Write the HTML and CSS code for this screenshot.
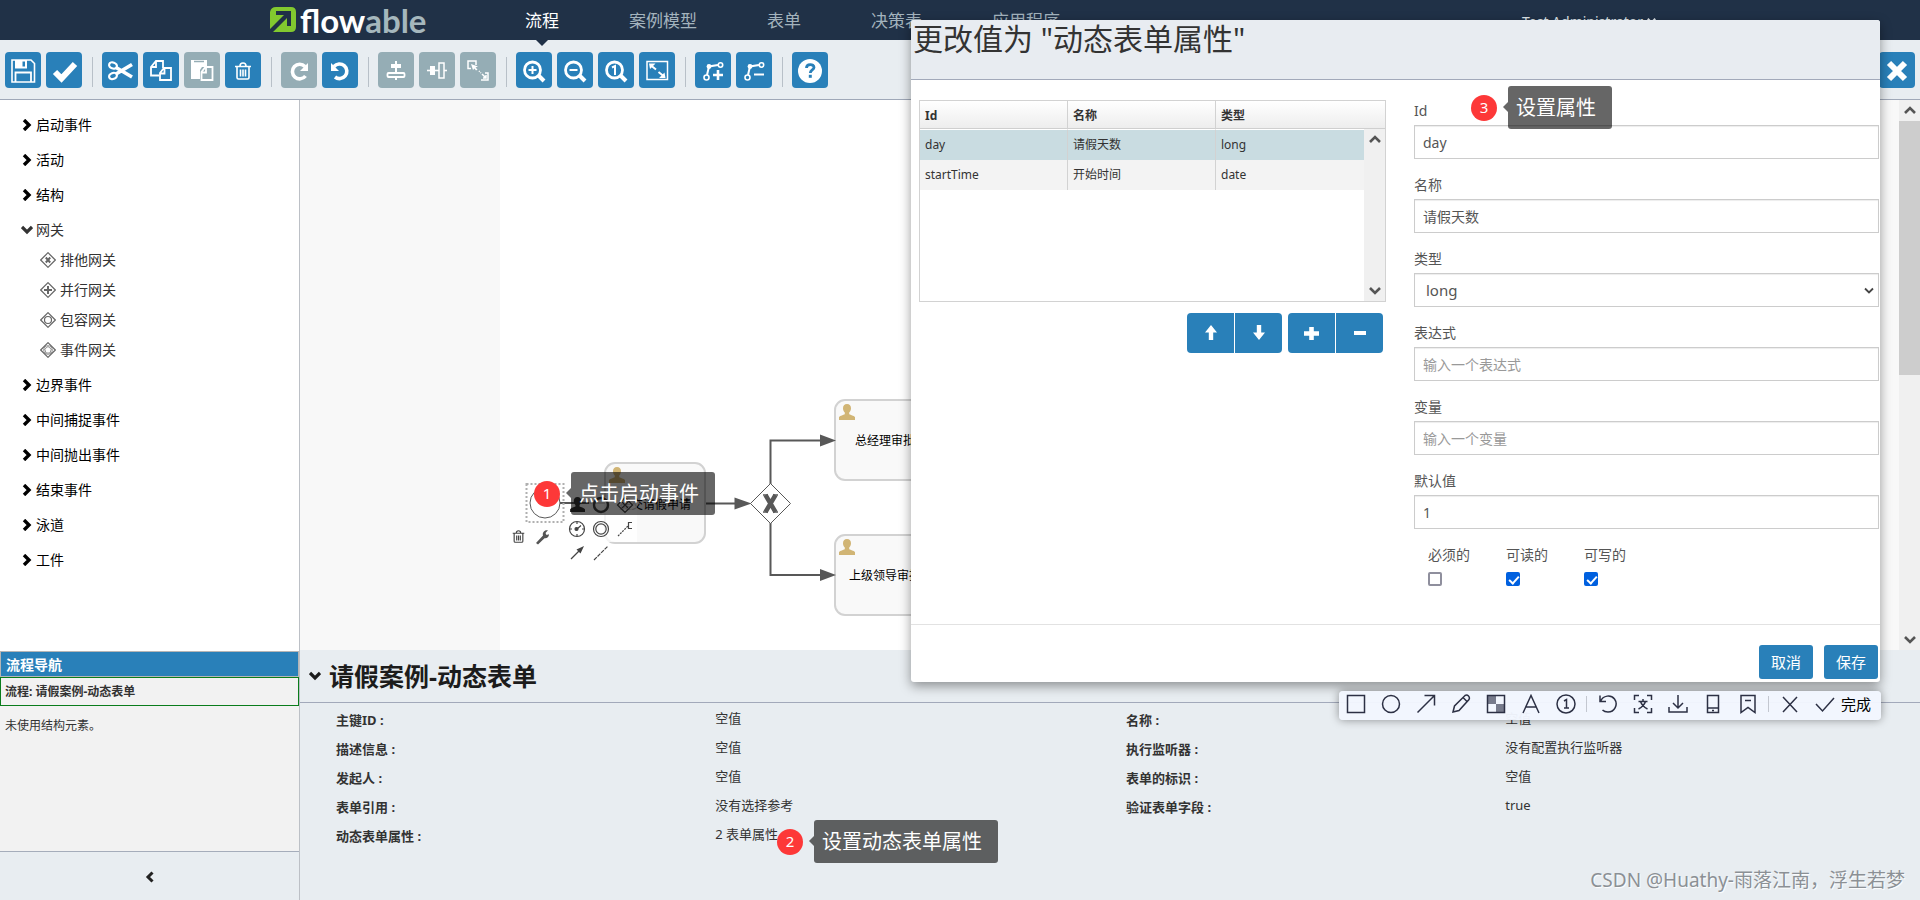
FILE: index.html
```html
<!DOCTYPE html>
<html lang="zh-CN">
<head>
<meta charset="utf-8">
<title>Flowable Modeler</title>
<link rel="stylesheet" href="styles.css">
</head>
<body>
<svg class="defs" aria-hidden="true">
  <symbol id="chev-right" viewBox="0 0 10 12"><path d="M2 1l5 5-5 5" fill="none" stroke="currentColor" stroke-width="3.4"/></symbol>
  <symbol id="chev-down" viewBox="0 0 12 10"><path d="M1 2l5 5 5-5" fill="none" stroke="currentColor" stroke-width="3.2"/></symbol>
  <symbol id="arrow-up" viewBox="0 0 12 12"><path d="M1 9l5-5 5 5" fill="none" stroke="#555" stroke-width="2.6"/></symbol>
  <symbol id="arrow-down" viewBox="0 0 12 12"><path d="M1 3l5 5 5-5" fill="none" stroke="#555" stroke-width="2.6"/></symbol>
  <symbol id="user" viewBox="0 0 16 16"><path d="M8 0c2.700 0 4 1.900 4 4.300 0 1.900-.8 3.400-1.800 4.300v1.600c1.600.9 4.300 1.300 5.800 2.800V16H0v-3c1.500-1.500 4.200-1.900 5.800-2.800V8.600C4.800 7.700 4 6.200 4 4.300 4 1.900 5.300 0 8 0z" fill="currentColor"/></symbol>
  <symbol id="trash" viewBox="0 0 18 18"><path d="M1 4.500h16M6 4c0-4 6-4 6 0M3 5v10.500q0 1.500 1.500 1.500h9q1.500 0 1.500-1.500V5M6.500 7.500v7M9 7.500v7M11.500 7.500v7" fill="none" stroke="currentColor" stroke-width="1.600"/></symbol>
</svg>

<header class="topbar">
  <a class="logo" href="#">
    <svg width="26" height="26" viewBox="0 0 26 26"><path d="M6 0h15q5 0 5 5v15q0 5-5 5H3l5-5 9-9v8h4V4H6v4h8l-8 8-6 6V5q1-5 6-5z" fill="#82c92f"/><path d="M0 25l8-10v4z" fill="#203147"/></svg>
    <span class="logo-text">flow<span class="logo-dim">able</span></span>
  </a>
  <nav class="main-nav">
    <a class="active" href="#">流程</a><a href="#">案例模型</a><a href="#">表单</a><a href="#">决策表</a><a href="#">应用程序</a>
  </nav>
  <a class="account" href="#">Test Administrator <svg width="9" height="9" viewBox="0 0 12 12"><path d="M1 1l5 5 5-5" fill="none" stroke="currentColor" stroke-width="2.600"/></svg></a>
</header>

<div class="toolbar">
  <div class="group">
    <button aria-label="保存"><svg viewBox="0 0 36 36"><path d="M7 8h19l3.500 3.500V30H7z" fill="none" stroke="#fff" stroke-width="1.600"/><path d="M10 8h12v8.500H10z" fill="#fff"/><path d="M17.500 9.500h2.500v5h-2.500z" fill="#2980b9"/><path d="M10.500 30v-9.500h15.500V30" fill="none" stroke="#fff" stroke-width="1.800"/></svg></button>
    <button aria-label="验证"><svg viewBox="0 0 36 36"><path d="M9 20l6.500 6.500L29 12" fill="none" stroke="#fff" stroke-width="6"/></svg></button>
  </div>
  <div class="group">
    <button aria-label="剪切"><svg viewBox="0 0 36 36" fill="none" stroke="#fff" stroke-width="2.200"><ellipse cx="11" cy="13.500" rx="4" ry="3" transform="rotate(20 11 13.500)"/><ellipse cx="11" cy="24" rx="4" ry="3" transform="rotate(-20 11 24)"/><path d="M14 15.500L30 25M14 22L30 12.500" stroke-width="3.600"/></svg></button>
    <button aria-label="复制"><svg viewBox="0 0 36 36" fill="none" stroke="#fff" stroke-width="1.800"><path d="M16 23.500H8V15l5-6h7v7"/><path d="M13 9v6H8M17 28v-7l4-5h7v12zM21.500 16v5.500H17"/></svg></button>
    <button class="off" aria-label="粘贴"><svg viewBox="0 0 36 36"><path d="M7 8h16v7h-5l-2 3v9H7z" fill="#fff"/><path d="M10 9.500h10" stroke="#95adb5" stroke-width="1.500"/><path d="M17.500 28v-8l4-5h7v13z" fill="#95adb5" stroke="#fff" stroke-width="1.800"/><path d="M22 15v5.500h-4.500" fill="none" stroke="#fff" stroke-width="1.800"/></svg></button>
    <button aria-label="删除"><svg viewBox="0 0 36 36"><use href="#trash" x="9" y="10" width="18" height="18" color="#fff"/></svg></button>
  </div>
  <div class="group">
    <button class="off" aria-label="重做"><svg viewBox="0 0 36 36"><path d="M24 14.500A7.300 7.300 0 1 0 24.500 24" fill="none" stroke="#fff" stroke-width="3.600"/><path d="M27 11v8h-8z" fill="#fff"/></svg></button>
    <button aria-label="撤销"><svg viewBox="0 0 36 36"><path d="M12 14.500A7.300 7.300 0 1 1 13 25" fill="none" stroke="#fff" stroke-width="3.600"/><path d="M9 11v8h8z" fill="#fff"/></svg></button>
  </div>
  <div class="group">
    <button class="off" aria-label="垂直对齐"><svg viewBox="0 0 36 36"><path d="M18 9v19" stroke="#fff" stroke-width="2"/><path d="M13 12h10v4H13z" fill="#fff"/><rect x="9.500" y="21" width="17" height="4" rx="1" fill="#95adb5" stroke="#fff" stroke-width="1.800"/></svg></button>
    <button class="off" aria-label="水平对齐"><svg viewBox="0 0 36 36"><path d="M8 18.500h20" stroke="#fff" stroke-width="1.600"/><path d="M11 14h5v9h-5z" fill="#fff"/><rect x="20" y="11" width="5" height="15" fill="#95adb5" stroke="#fff" stroke-width="1.500"/></svg></button>
    <button class="off" aria-label="同样大小"><svg viewBox="0 0 36 36" fill="none" stroke="#fff" stroke-width="1.500"><path d="M11 16.500H8V9h8v4"/><path d="M11 12l7 2.500-2.500 1 2 2-1.500 1-1.500-2-1.500 1.500z" fill="#fff" stroke="none"/><path d="M19 19l2 2" stroke-dasharray="1 1"/><path d="M21 28h7v-7h-3M22 22l4 4m0-3v3h-3"/></svg></button>
  </div>
  <div class="group">
    <button aria-label="放大"><svg viewBox="0 0 36 36" fill="none" stroke="#fff"><circle cx="16.500" cy="18" r="8" stroke-width="2.800"/><path d="M22 23l6 6" stroke-width="4"/><path d="M12.500 18h8M16.500 14v8" stroke-width="2"/></svg></button>
    <button aria-label="缩小"><svg viewBox="0 0 36 36" fill="none" stroke="#fff"><circle cx="16.500" cy="18" r="8" stroke-width="2.800"/><path d="M22 23l6 6" stroke-width="4"/><path d="M12.500 18h8" stroke-width="2"/></svg></button>
    <button aria-label="原始大小"><svg viewBox="0 0 36 36" fill="none" stroke="#fff"><circle cx="16.500" cy="18" r="8" stroke-width="2.800"/><path d="M22 23l6 6" stroke-width="4"/><path d="M14 15.500l3-1.500v9" stroke-width="2"/></svg></button>
    <button aria-label="适应窗口"><svg viewBox="0 0 36 36" fill="none" stroke="#fff"><rect x="8" y="9.500" width="20.500" height="18" stroke-width="1.500"/><path d="M12 13.500l5 4M19.500 20l5 4" stroke-width="2"/><path d="M10 11.500h6.500L11 17zM26.500 26H20l5.500-5.500z" fill="#fff" stroke="none"/></svg></button>
  </div>
  <div class="group">
    <button aria-label="添加折点"><svg viewBox="0 0 36 36" fill="none" stroke="#fff" stroke-width="1.600"><circle cx="11.500" cy="25.500" r="2.500"/><circle cx="25.500" cy="13" r="2.200"/><path d="M12 23l2-8.500L23 13" stroke-width="2"/><circle cx="14" cy="14.500" r="2.400" fill="#fff" stroke="none"/><path d="M18 23h10M23 18v10" stroke-width="2.600"/></svg></button>
    <button aria-label="删除折点"><svg viewBox="0 0 36 36" fill="none" stroke="#fff" stroke-width="1.600"><circle cx="11.500" cy="25.500" r="2.500"/><circle cx="25.500" cy="13" r="2.200"/><path d="M12 23l2-8.500L23 13" stroke-width="2"/><circle cx="14" cy="14.500" r="2.400" fill="#fff" stroke="none"/><path d="M18 22.500h10" stroke-width="2"/></svg></button>
  </div>
  <div class="group">
    <button aria-label="帮助"><svg viewBox="0 0 36 36"><circle cx="18" cy="19" r="12" fill="#fff"/><path d="M14.500 16c0-4.500 7.500-4.500 7.500-.5 0 2.500-3.700 2.500-3.700 5.500" fill="none" stroke="#2980b9" stroke-width="2.800"/><path d="M16.800 22.800h3v3h-3z" fill="#2980b9"/></svg></button>
  </div>
  <button class="close" aria-label="关闭"><svg viewBox="0 0 36 36"><path d="M10 11l16 16M26 11L10 27" stroke="#fff" stroke-width="6"/></svg></button>
</div>

<div class="workspace">
  <aside class="sidebar">
    <ul class="palette">
      <li><span class="head"><svg><use href="#chev-right"/></svg>启动事件</span></li>
      <li><span class="head"><svg><use href="#chev-right"/></svg>活动</span></li>
      <li><span class="head"><svg><use href="#chev-right"/></svg>结构</span></li>
      <li class="open"><span class="head"><svg><use href="#chev-down"/></svg>网关</span>
        <ul class="stencils">
          <li><svg viewBox="0 0 16 16"><path d="M8 .7L15.300 8 8 15.300.7 8z"/><path d="M5.800 5.500l4.400 5M10.200 5.500l-4.400 5" stroke-width="2"/></svg>排他网关</li>
          <li><svg viewBox="0 0 16 16"><path d="M8 .7L15.300 8 8 15.300.7 8z"/><path d="M4 8h8M8 4v8" stroke-width="2"/></svg>并行网关</li>
          <li><svg viewBox="0 0 16 16"><path d="M8 .7L15.300 8 8 15.300.7 8z"/><circle cx="8" cy="8" r="3.500"/></svg>包容网关</li>
          <li><svg viewBox="0 0 16 16"><path d="M8 .7L15.300 8 8 15.300.7 8z"/><circle cx="8" cy="8" r="4.300" stroke-width=".7"/><path d="M8 4.500l3.300 2.500-1.300 4H6L4.700 7z" stroke-width=".7"/></svg>事件网关</li>
        </ul>
      </li>
      <li><span class="head"><svg><use href="#chev-right"/></svg>边界事件</span></li>
      <li><span class="head"><svg><use href="#chev-right"/></svg>中间捕捉事件</span></li>
      <li><span class="head"><svg><use href="#chev-right"/></svg>中间抛出事件</span></li>
      <li><span class="head"><svg><use href="#chev-right"/></svg>结束事件</span></li>
      <li><span class="head"><svg><use href="#chev-right"/></svg>泳道</span></li>
      <li><span class="head"><svg><use href="#chev-right"/></svg>工件</span></li>
    </ul>
    <section class="navigator">
      <h2>流程导航</h2>
      <p class="current">流程: 请假案例-动态表单</p>
      <p class="empty">未使用结构元素。</p>
    </section>
    <button class="collapse" aria-label="收起"><svg width="10" height="12" viewBox="0 0 10 12"><path d="M7.500 1.500L3 6l4.500 4.500" fill="none" stroke="#222" stroke-width="3"/></svg></button>
  </aside>

  <main class="editor">
    <div class="canvas">
      <div class="sheet">
        <svg class="diagram" width="600" height="550" viewBox="500 100 600 550">
          <g fill="#f9f9f9" stroke="#d2d2d2" stroke-width="2">
            <rect x="605" y="463" width="100" height="80" rx="10"/>
            <rect x="835" y="400" width="100" height="80" rx="10"/>
            <rect x="835" y="535" width="100" height="80" rx="10"/>
          </g>
          <g color="#d1b575">
            <use href="#user" x="609" y="467" width="16" height="16"/>
            <use href="#user" x="839" y="404" width="16" height="16"/>
            <use href="#user" x="839" y="539" width="16" height="16"/>
          </g>
          <g class="node-label">
            <text x="655" y="509">提交请假申请</text>
            <text x="885" y="445">总经理审批</text>
            <text x="885" y="580">上级领导审批</text>
          </g>
          <g fill="none" stroke="#585858" stroke-width="2">
            <path d="M560 503h45M706 503.500h30M770.500 484V440.500H822M770.500 522v53H822"/>
          </g>
          <path d="M734.500 497.500v12l17-6zM820 434.500v12l16-6zM820 569v12l16-6z" fill="#585858"/>
          <path d="M770.500 483.500l20 20-20 20-20-20z" fill="#fff" stroke="#585858"/>
          <path d="M765.500 495l10 17M775.500 495l-10 17" stroke="#585858" stroke-width="4.500"/>
          <path d="M763 495h5M773 495h5M763 512h5M773 512h5" stroke="#585858" stroke-width="1.500"/>
          <rect x="589" y="497" width="48" height="45" fill="#fff" opacity=".75"/>
          <circle cx="545" cy="503" r="15" fill="#fff" stroke="#585858"/>
          <rect x="526.500" y="484" width="37" height="38" fill="none" stroke="#b0b0b0" stroke-width="2" stroke-dasharray="2 2"/>
          <use href="#trash" x="512" y="530" width="13" height="13" color="#444"/>
          <path d="M536 543l7-7.500c-1-3 1.500-6 5-5.200l-2.500 2.700 1 2 2.500-.8c0 3-2.500 4.500-4.500 4l-6.500 6.300z" fill="#555"/>
          <use href="#user" x="570" y="497" width="15" height="15" color="#333"/>
          <g fill="none" stroke="#444" stroke-width="1.200">
            <circle cx="601" cy="505" r="7" stroke-width="2.400"/>
            <path d="M625 497.500l7.500 7.500-7.500 7.500-7.500-7.500zM622 502l6 6M628 502l-6 6"/>
            <circle cx="577" cy="529" r="7.500"/><path d="M577 529l4-3.500M577 522v2M577 534v2M570 529h2M582 529h2"/><circle cx="576.500" cy="529" r="1.500" fill="#444"/>
            <circle cx="601" cy="529" r="7.500"/><circle cx="601" cy="529" r="5.200"/>
            <path d="M618 536l10-10" stroke-dasharray="2 1"/><path d="M632 522.500h-3.500v6h3.500"/>
            <path d="M571 559l10-10"/><path d="M576.500 549.500L584 546l-3.500 7.500z" fill="#444" stroke="none"/>
            <path d="M594 560l14-14" stroke-dasharray="4 1"/>
          </g>
        </svg>
      </div>
      <div class="scrollbar">
        <svg><use href="#arrow-up"/></svg><span class="thumb"></span><svg class="end"><use href="#arrow-down"/></svg>
      </div>
    </div>
    <section class="properties">
      <h1><svg width="12" height="10"><use href="#chev-down"/></svg>请假案例-动态表单</h1>
      <div class="columns">
        <dl>
          <dt>主键ID :</dt><dd>空值</dd>
          <dt>描述信息 :</dt><dd>空值</dd>
          <dt>发起人 :</dt><dd>空值</dd>
          <dt>表单引用 :</dt><dd>没有选择参考</dd>
          <dt>动态表单属性 :</dt><dd>2 表单属性</dd>
        </dl>
        <dl>
          <dt>名称 :</dt><dd>空值</dd>
          <dt>执行监听器 :</dt><dd>没有配置执行监听器</dd>
          <dt>表单的标识 :</dt><dd>空值</dd>
          <dt>验证表单字段 :</dt><dd>true</dd>
        </dl>
      </div>
    </section>
  </main>
</div>

<div class="dialog" role="dialog" aria-labelledby="dialog-title">
  <h2 id="dialog-title">更改值为 "动态表单属性"</h2>
  <div class="dialog-body">
    <div class="list-pane">
      <div class="grid">
        <table>
          <thead><tr><th>Id</th><th>名称</th><th>类型</th></tr></thead>
          <tbody>
            <tr class="selected"><td>day</td><td>请假天数</td><td>long</td></tr>
            <tr><td>startTime</td><td>开始时间</td><td>date</td></tr>
          </tbody>
        </table>
        <div class="scrollbar grid-scroll"><svg><use href="#arrow-up"/></svg><svg class="end"><use href="#arrow-down"/></svg></div>
      </div>
      <div class="grid-actions">
        <div class="pair">
          <button aria-label="上移"><svg width="14" height="16" viewBox="0 0 14 16"><path d="M7 0l6 7.500H9.200V15H4.800V7.500H1z" fill="#fff"/></svg></button>
          <button aria-label="下移"><svg width="14" height="16" viewBox="0 0 14 16"><path d="M7 15l6-7.500H9.200V0H4.800v7.500H1z" fill="#fff"/></svg></button>
        </div>
        <div class="pair">
          <button aria-label="添加"><svg width="16" height="16" viewBox="0 0 16 16"><path d="M7.500 2v13M0 8.500h15" stroke="#fff" stroke-width="4.600"/></svg></button>
          <button aria-label="删除"><svg width="16" height="16" viewBox="0 0 16 16"><path d="M2 8h12" stroke="#fff" stroke-width="4"/></svg></button>
        </div>
      </div>
    </div>
    <form class="fields">
      <label for="f-id">Id</label><input id="f-id" type="text" value="day">
      <label for="f-name">名称</label><input id="f-name" type="text" value="请假天数">
      <label for="f-type">类型</label>
      <div class="select"><select id="f-type"><option>long</option><option>date</option></select><svg width="10" height="8" viewBox="0 0 10 8"><path d="M1 1.500l4 4 4-4" fill="none" stroke="#444" stroke-width="1.800"/></svg></div>
      <label for="f-exp">表达式</label><input id="f-exp" type="text" placeholder="输入一个表达式">
      <label for="f-var">变量</label><input id="f-var" type="text" placeholder="输入一个变量">
      <label for="f-def">默认值</label><input id="f-def" type="text" value="1">
      <div class="checks">
        <label>必须的<input type="checkbox"></label>
        <label>可读的<input type="checkbox" checked></label>
        <label>可写的<input type="checkbox" checked></label>
      </div>
    </form>
  </div>
  <div class="dialog-footer"><button>取消</button><button>保存</button></div>
</div>

<div class="step step-1"><span class="num">1</span><span class="tip">点击启动事件</span></div>
<div class="step step-2"><span class="num">2</span><span class="tip">设置动态表单属性</span></div>
<div class="step step-3"><span class="num">3</span><span class="tip">设置属性</span></div>

<div class="capture">
  <button aria-label="矩形"><svg viewBox="0 0 20 20"><rect x="1.500" y="1.500" width="17" height="17"/></svg></button>
  <button aria-label="椭圆"><svg viewBox="0 0 20 20"><circle cx="10" cy="10" r="8.500"/></svg></button>
  <button aria-label="箭头"><svg viewBox="0 0 20 20"><path d="M1.500 18.500L18 2M8.500 1.500h10v10"/></svg></button>
  <button aria-label="画笔"><svg viewBox="0 0 20 20"><path d="M2 18l1.500-6L14 1.500q2-1 3.500.5t.5 3.500L8 16.500zM12 3.500l4.500 4.500"/></svg></button>
  <button aria-label="马赛克"><svg viewBox="0 0 20 20"><path d="M2 2h8v8H2zM10 10h8v8h-8z" fill="#777b8c" stroke="none"/><rect x="1.500" y="1.500" width="17" height="17"/></svg></button>
  <button aria-label="文字"><svg viewBox="0 0 20 20"><path d="M2 19L10 1.500 18 19M5 13h10"/></svg></button>
  <button aria-label="序号"><svg viewBox="0 0 20 20"><circle cx="10" cy="10" r="9"/><path d="M8 7l2.500-1.500V14M8 14h5"/></svg></button>
  <i></i>
  <button aria-label="撤销"><svg viewBox="0 0 20 20"><path d="M2 1.500v6h6M2.500 7.500C5 1 13 .5 16.500 5c4 5.500 0 13-6.500 13-2.500 0-4-.5-5.500-2"/></svg></button>
  <button aria-label="翻译"><svg viewBox="0 0 20 20"><path d="M6 1.500H1.500V6M14 1.500h4.500V6M6 18.500H1.500V14M14 18.500h4.500V14M5.500 7.500h9M10 5v2.500M7.500 7.500c1 3 4 6 7 7.500M12.500 7.500c-1 3-4 6-7 7.500"/></svg></button>
  <button aria-label="保存"><svg viewBox="0 0 20 20"><path d="M10 1v12.500M5 9l5 5 5-5M1 13v5h18v-5"/></svg></button>
  <button aria-label="手机"><svg viewBox="0 0 20 20"><path d="M4.500 1.500h11v17h-11zM4.500 14h11M9 16.500h2"/></svg></button>
  <button aria-label="收藏"><svg viewBox="0 0 20 20"><path d="M3 1.500h14v17l-7-5-7 5zM7 6.500h6"/></svg></button>
  <i></i>
  <button aria-label="取消"><svg viewBox="0 0 20 20"><path d="M3 3l14 15M17 3L3 18"/></svg></button>
  <button class="done"><svg viewBox="0 0 20 20"><path d="M1 10l6.500 7L19 4"/></svg>完成</button>
</div>

<div class="watermark">CSDN @Huathy-雨落江南，浮生若梦</div>
</body>
</html>
```
FILE: styles.css
```css
* { box-sizing: border-box; }
body {
  margin: 0;
  min-height: 100vh;
  display: flex;
  flex-direction: column;
  position: relative;
  overflow: hidden;
  background: #e8edf1;
  color: #333;
  font: 14px/20px "Noto Sans", "Noto Sans CJK SC", sans-serif;
}
button, input, select { font: inherit; color: inherit; }
button { border: 0; padding: 0; margin: 0; cursor: pointer; }
a { color: inherit; text-decoration: none; }
ul { list-style: none; margin: 0; padding: 0; }
.defs { display: none; }

/* top bar */
.topbar { display: flex; height: 40px; background: #203147; padding-left: 270px; }
.logo { display: flex; gap: 4px; width: 220px; padding-top: 7px; }
.logo-text { font: 700 33px/26px Lato, sans-serif; color: #fff; }
.logo-dim { color: #a5b7bd; }
.main-nav { display: flex; flex: 1; }
.main-nav a { position: relative; padding: 0 35px; font-size: 17px; line-height: 42px; color: #a3b3bd; }
.main-nav .active { color: #fff; }
.main-nav .active::after {
  content: "";
  position: absolute;
  top: 40px;
  left: 50%;
  margin-left: -6px;
  border: 6px solid transparent;
  border-top-color: #203147;
  border-bottom: 0;
}
.account { width: 398px; color: #dfe5e9; line-height: 44px; }

/* tool bar */
.toolbar { display: flex; align-items: center; height: 60px; padding: 0 5px; border-bottom: 1px solid #9fa8b8; }
.group { display: flex; gap: 5px; }
.group + .group { margin-left: 10px; padding-left: 10px; position: relative; }
.group + .group::before { content: ""; position: absolute; left: 0; top: 5px; bottom: 1px; border-left: 1px solid #b8c0c8; }
.toolbar button { width: 36px; height: 36px; border-radius: 4px; background: #2980b9; }
.toolbar button svg { display: block; width: 36px; height: 36px; }
.toolbar .off { background: #95adb5; }
.toolbar .close { margin-left: auto; }

.workspace { flex: 1; display: flex; }

/* side bar */
.sidebar { width: 300px; display: flex; flex-direction: column; border-right: 1px solid #bcc0c6; }
.palette { flex: 1; background: #fff; padding-top: 5px; }
.palette > li { margin-top: 5px; color: #000; }
.palette > .open { color: #333; }
.head { display: flex; align-items: center; height: 30px; padding-left: 21px; gap: 3px; }
.head svg { width: 12px; height: 12px; }
.stencils li { display: flex; align-items: center; gap: 4px; height: 30px; padding-left: 40px; }
.stencils svg { width: 16px; height: 16px; fill: none; stroke: #666; stroke-width: 1.200; }
.navigator { height: 200px; background: #f2f2f2; font-size: 12px; }
.navigator h2 { margin: 0; height: 26px; padding-left: 5px; border: 1px solid #b5b5b5; background: #2980b9; color: #fff; font-size: 14px; line-height: 26px; }
.navigator p { margin: 0; padding-left: 5px; }
.navigator .current { height: 29px; border: 1px solid #0a7d1c; font-weight: 700; line-height: 28px; padding-left: 4px; }
.navigator .empty { padding-top: 10px; }
.collapse { height: 49px; padding-top: 4px; background: #e8edf1; border-top: 1px solid #a5adbb; }

/* canvas */
.editor { flex: 1; min-width: 0; display: flex; flex-direction: column; }
.canvas { flex: 1; display: flex; justify-content: space-between; background: #f8f8f8; padding-left: 200px; }
.sheet { width: 1200px; background: #fff; }
.diagram { display: block; }
.node-label { font-size: 12px; text-anchor: middle; fill: #000; }
.scrollbar { width: 21px; display: flex; flex-direction: column; align-items: center; background: #f0f0f0; }
.scrollbar svg { width: 12px; height: 12px; margin: 4px 0 5px; }
.scrollbar .end { margin-top: auto; margin-bottom: 4px; }
.thumb { width: 100%; height: 254px; background: #cdcdcd; }

/* properties */
.properties { min-height: 250px; }
.properties h1 { margin: 0; display: flex; align-items: center; gap: 8px; height: 53px; padding-left: 9px; border-bottom: 1px solid #a2a9ba; color: #1c1c1c; font-size: 25px; line-height: 50px; }
.columns { display: flex; padding: 3px 4px 0 36px; font-size: 13px; }
.columns dl { flex: 1; margin: 0; display: grid; grid-template-columns: 48% 52%; grid-auto-rows: 29px; align-content: start; }
.columns dt { font-weight: 700; line-height: 29px; }
.columns dd { margin: 0; line-height: 24px; }

/* dialog */
.dialog { position: absolute; top: 20px; left: 911px; right: 40px; background: #fff; border-radius: 3px; box-shadow: 0 4px 12px rgba(0, 0, 0, .4); }
.dialog h2 { margin: 0; height: 60px; padding-left: 2px; border-bottom: 1px solid #a2a9ba; border-radius: 3px 3px 0 0; background: #e8ecf1; font-size: 30px; font-weight: 400; line-height: 38px; }
.dialog-body { display: flex; gap: 28px; height: 545px; padding: 20px 1px 0 8px; border-bottom: 1px solid #e2e2e2; }
.list-pane { width: 467px; }
.grid { position: relative; height: 202px; border: 1px solid #d2d2d2; font-size: 12px; }
.grid table { width: 100%; border-collapse: separate; border-spacing: 0; table-layout: fixed; }
.grid th, .grid td { width: 148px; padding: 0 5px; border-right: 1px solid #d2d2d2; text-align: left; }
.grid th:last-child, .grid td:last-child { width: auto; border-right: 0; }
.grid th { height: 28px; padding-top: 2px; border-bottom: 1px solid #cfcfcf; background: linear-gradient(#fff, #ededed); }
.grid td { height: 30px; background: #f3f3f3; }
.grid .selected td { height: 31px; border-top: 1px solid #fff; background: #c9dce1; }
.grid-scroll { position: absolute; top: 28px; right: 0; bottom: 0; }
.grid-actions { display: flex; justify-content: flex-end; gap: 6px; padding: 11px 3px 0; }
.pair { display: flex; gap: 1px; border-radius: 4px; overflow: hidden; }
.pair button { width: 47px; height: 40px; background: #2980b9; }
.pair svg { display: block; margin: 0 auto; }

.fields { flex: 1; color: #555; }
.fields > label { display: block; margin-bottom: 3px; line-height: 22px; }
.fields > input, .fields select { display: block; width: 100%; height: 34px; margin-bottom: 15px; padding: 0 8px; border: 1px solid #ccc; border-radius: 0; background: #fff; box-shadow: inset 0 1px 1px rgba(0, 0, 0, .075); outline: 0; }
.fields ::placeholder { color: #999; opacity: 1; }
.select { position: relative; }
.fields select { appearance: none; padding-left: 11px; font-size: 15px; }
.select svg { position: absolute; right: 5px; top: 14px; }
.checks { display: flex; gap: 36px; padding: 0 14px; margin-top: 16px; }
.checks label { display: grid; gap: 7px; }
.checks input { appearance: none; position: relative; width: 14px; height: 14px; margin: 0; border: 2px solid #8f8f9d; border-radius: 2px; background: #fff; }
.checks input:checked { border-color: #0060df; background: #0060df; }
.checks input:checked::after { content: ""; position: absolute; left: 3px; top: 0; width: 4px; height: 8px; border: solid #fff; border-width: 0 2px 2px 0; transform: rotate(42deg); }
.dialog-footer { display: flex; justify-content: flex-end; gap: 11px; padding: 20px 2px 3px; }
.dialog-footer button { width: 54px; height: 34px; border-radius: 3px; background: #2980b9; color: #fff; font-size: 15px; }

/* numbered steps */
.step { position: absolute; display: flex; align-items: center; gap: 11px; height: 43px; }
.step-1 { left: 534px; top: 472px; }
.step-2 { left: 777px; top: 820px; }
.step-3 { left: 1471px; top: 86px; }
.num { width: 26px; height: 26px; border-radius: 50%; background: #fd3838; color: #fff; font-size: 15px; line-height: 24px; text-align: center; }
.tip { position: relative; height: 43px; padding: 0 16px 0 8px; border-radius: 3px; background: rgba(0, 0, 0, .6); color: #fff; font-size: 20px; line-height: 44px; }
.tip::before { content: ""; position: absolute; left: -5px; top: 16px; border: 5px solid transparent; border-right-color: rgba(0, 0, 0, .6); border-left: 0; }

/* capture bar */
.capture { position: absolute; right: 39px; top: 691px; display: flex; align-items: center; gap: 15px; height: 29px; padding: 0 10px 3px 7px; border-radius: 4px; background: rgba(242, 246, 254, .97); box-shadow: 0 0 10px rgba(0, 0, 0, .4); }
.capture button { display: flex; align-items: center; gap: 6px; background: none; color: #000; font-size: 15px; }
.capture svg { width: 20px; height: 20px; fill: none; stroke: #2c3044; stroke-width: 1.500; }
.capture i { width: 1px; height: 16px; margin: 0 -4px 0 -5px; background: #c3c7d0; }

.watermark { position: absolute; right: 15px; top: 866px; color: #8b9095; font-family: "Noto Sans", "Noto Sans CJK TC", sans-serif; font-size: 19px; line-height: 28px; text-shadow: 1px 1px 1px #fff; }
```
